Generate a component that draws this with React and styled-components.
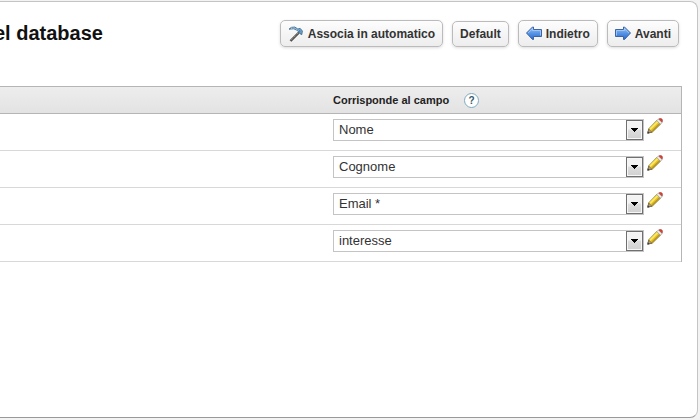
import React from "react";
import styled, { createGlobalStyle } from "styled-components";

const GlobalStyle = createGlobalStyle`
  *, *::before, *::after { box-sizing: border-box; }
  body {
    margin: 0;
    background: #f3f3f3;
    color: #333;
    font-family: "Liberation Sans", Arial, Helvetica, sans-serif;
  }
`;

const Page = styled.div`
  display: flex;
  min-height: 100vh;
  padding: 1px 2px 2px 0;
`;

const Panel = styled.main`
  flex: 1;
  min-width: 0;
  padding-right: 15px;
  background: #fff;
  border: 1px solid #c4c4c4;
  border-left: 0;
  border-bottom-color: #999;
  border-radius: 0 8px 8px 0;
`;

const Header = styled.header`
  display: flex;
  align-items: flex-start;
  justify-content: space-between;
  padding: 18px 3px 39px 0;
`;

const Title = styled.h1`
  margin: 0 0 0 -6px;
  color: #111;
  font-size: 20px;
  line-height: 26px;
  white-space: nowrap;
`;

const Toolbar = styled.div`
  display: flex;
  align-items: flex-end;
  gap: 9px;
`;

const ToolButton = styled.button`
  display: flex;
  align-items: center;
  gap: 4px;
  height: ${({ $compact }) => ($compact ? "26px" : "27px")};
  padding: 0 7px;
  border: 1px solid #bbb;
  border-radius: 5px;
  background: linear-gradient(#fdfdfd, #ededed);
  box-shadow: 0 1px 3px rgba(0, 0, 0, 0.14);
  color: #333;
  font: bold 12px/16px "Liberation Sans", Arial, sans-serif;
  white-space: nowrap;
  cursor: pointer;
`;

const Icon = styled.svg`
  display: block;
  flex: none;
  width: 16px;
  height: 16px;
`;

const MappingTable = styled.table`
  width: 100%;
  table-layout: fixed;
  border-collapse: separate;
  border-spacing: 0;
  border-right: 1px solid #b5b5b5;
`;

const HeadCell = styled.th`
  width: ${({ $field }) => ($field ? "348px" : "auto")};
  height: 28px;
  padding: 0;
  border-top: 1px solid #b5b5b5;
  border-bottom: 1px solid #b5b5b5;
  background: linear-gradient(#ededed, #e3e3e3);
  color: #222;
  font-size: 11px;
  text-align: left;
`;

const HeadLabel = styled.div`
  display: flex;
  align-items: center;
  gap: 15px;
`;

const HelpButton = styled.button`
  display: grid;
  place-items: center;
  width: 15px;
  height: 15px;
  padding: 0;
  border: 1px solid #7eabc0;
  border-radius: 50%;
  background: #fff;
  color: #35596b;
  font: bold 10px/13px "Liberation Sans", Arial, sans-serif;
  cursor: help;
`;

const Cell = styled.td`
  height: 37px;
  padding: 0;
  border-bottom: 1px solid #d8d8d8;
  vertical-align: top;
`;

const FieldRow = styled.div`
  display: flex;
  align-items: flex-start;
  gap: 3px;
  padding: 4px 18px 0 0;
`;

const SelectBox = styled.div`
  display: grid;
  flex: 1;
  margin-top: 1px;
`;

const FieldSelect = styled.select`
  grid-area: 1 / 1;
  appearance: none;
  width: 100%;
  height: 22px;
  margin: 0;
  padding: 0 20px 0 5px;
  border: 1px solid #c4c4c4;
  border-radius: 0;
  background: #fff;
  color: #333;
  font: 13px/20px "Liberation Sans", Arial, sans-serif;
`;

const SelectArrow = styled.span`
  grid-area: 1 / 1;
  justify-self: end;
  display: grid;
  place-items: center;
  width: 17px;
  height: 20px;
  margin: 1px 1px 1px 0;
  border: 1px solid #707070;
  background: linear-gradient(#f3f3f3 0 45%, #dedede 50%, #d0d0d0);
  box-shadow: inset 0 0 0 1px #f7f7f7;
  pointer-events: none;
`;

const ArrowMark = styled.svg`
  display: block;
  width: 7px;
  height: 4px;
`;

const EditButton = styled.button`
  padding: 0;
  border: 0;
  background: none;
  cursor: pointer;
`;

function PickaxeIcon() {
  return (
    <Icon viewBox="0 0 16 16" aria-hidden="true">
      <path d="M2.5 15 11 6.5" stroke="#4d4d4d" strokeWidth="2.4" />
      <path d="M3 14.2 10.5 6.7" stroke="#a9a9a9" strokeWidth="0.9" strokeDasharray="1.4 0.8" />
      <path d="M1 3.2 3.2 1.4 6.8 1 9.8 3 12.2 2.4 14.4 5 13.8 8.6 12.6 8.2 11.4 6.2 8.8 4.2 5.8 2.8z" fill="#6fa6cf" stroke="#38617f" strokeWidth="0.8" />
      <path d="M3 2.2 6.4 2 9.6 4 12.8 5.6" fill="none" stroke="#a9d6f5" strokeWidth="1" strokeDasharray="1.4 1" />
      <path d="M9.8 5.2 11.6 3.8 13 5.6 11.4 7z" fill="#4a86b5" />
    </Icon>
  );
}

function ArrowIcon({ direction }) {
  const id = `arrow-${direction}`;
  return (
    <Icon viewBox="0 0 16 16" aria-hidden="true">
      <defs>
        <linearGradient id={id} x1="0" y1="0" x2="0" y2="1">
          <stop offset="0" stopColor="#9cc5f5" />
          <stop offset="0.5" stopColor="#5794e6" />
          <stop offset="1" stopColor="#276bd0" />
        </linearGradient>
      </defs>
      <g transform={direction === "left" ? "translate(16 0) scale(-1 1)" : undefined}>
        <path d="M.5 3.5h8V1h1L15.5 7 9.5 13.5h-1v-3h-8z" fill={`url(#${id})`} stroke="#3c64a4" />
        <path d="M1.5 9.5v-5h8V2.7l4.5 4.4" fill="none" stroke="#a9cdf6" strokeWidth="0.8" />
      </g>
    </Icon>
  );
}

function PencilIcon() {
  return (
    <Icon viewBox="0 0 16 16" aria-hidden="true">
      <path d="M1 14.8 1.8 10.8 10.2 2.2 13.8 5.8 5.2 14.2z" fill="#e3bf2b" stroke="#7a6219" strokeWidth="0.9" />
      <path d="M3 11.2 11 3.2" stroke="#fbe95c" strokeWidth="2" />
      <path d="M4.6 13.2 12.8 5.2" stroke="#bd941b" strokeWidth="1" />
      <path d="m1.7 11.2 3.2 3-4.1 1z" fill="#b4a184" stroke="#665c48" strokeWidth="0.6" />
      <path d="M.3 15.7.8 13.2l2 1.9z" fill="#3a3a3a" />
      <path d="m9.8 2.6 1.6-1.6 3.7 3.6-1.7 1.7z" fill="#eeeeee" stroke="#8c8c8c" strokeWidth="0.6" />
      <path d="M11.8.9c1-.9 2.2-.8 3.1.1.9.9 1 2.1.2 3.2z" fill="#d9402f" stroke="#a23a35" strokeWidth="0.5" />
    </Icon>
  );
}

const fields = ["Nome", "Cognome", "Email *", "interesse"];

export default function App() {
  return (
    <>
      <GlobalStyle />
      <Page>
        <Panel>
          <Header>
            <Title>el database</Title>
            <Toolbar>
              <ToolButton type="button"><PickaxeIcon />Associa in automatico</ToolButton>
              <ToolButton type="button" $compact>Default</ToolButton>
              <ToolButton type="button"><ArrowIcon direction="left" />Indietro</ToolButton>
              <ToolButton type="button"><ArrowIcon direction="right" />Avanti</ToolButton>
            </Toolbar>
          </Header>
          <MappingTable>
            <thead>
              <tr>
                <HeadCell />
                <HeadCell scope="col" $field>
                  <HeadLabel>
                    <span id="field-heading">Corrisponde al campo</span>
                    <HelpButton type="button">?</HelpButton>
                  </HeadLabel>
                </HeadCell>
              </tr>
            </thead>
            <tbody>
              {fields.map((field) => (
                <tr key={field}>
                  <Cell />
                  <Cell>
                    <FieldRow>
                      <SelectBox>
                        <FieldSelect defaultValue={field} aria-labelledby="field-heading">
                          {fields.map((name) => <option key={name}>{name}</option>)}
                        </FieldSelect>
                        <SelectArrow>
                          <ArrowMark viewBox="0 0 7 4" shapeRendering="crispEdges" aria-hidden="true">
                            <path d="M0 0h7v1H6v1H5v1H4v1H3V3H2V2H1V1H0z" fill="#000" />
                          </ArrowMark>
                        </SelectArrow>
                      </SelectBox>
                      <EditButton type="button" aria-label="Modifica"><PencilIcon /></EditButton>
                    </FieldRow>
                  </Cell>
                </tr>
              ))}
            </tbody>
          </MappingTable>
        </Panel>
      </Page>
    </>
  );
}
